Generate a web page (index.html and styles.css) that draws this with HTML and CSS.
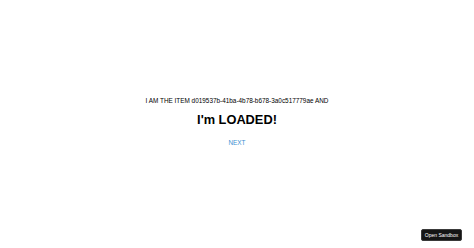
FILE: index.html
```html
<!DOCTYPE html>
<html>
<head>
<meta charset="utf-8">
<link rel="stylesheet" href="styles.css">
</head>
<body>
<main class="page">
  <div class="content">
    <p class="item">I AM THE ITEM d019537b-41ba-4b78-b678-3a0c517779ae AND</p>
    <h1 class="title">I'm LOADED!</h1>
    <a class="next" href="#">NEXT</a>
  </div>
</main>
<button class="sandbox">Open Sandbox</button>
</body>
</html>
```
FILE: styles.css
```css
html, body {
  margin: 0;
  padding: 0;
  background: #ffffff;
  font-family: "Liberation Sans", Arial, sans-serif;
  color: #000;
}
.page {
  width: 474px;
  height: 248px;
  display: flex;
  justify-content: center;
}
.content {
  padding-top: 97px;
  display: flex;
  flex-direction: column;
  align-items: center;
}
.item {
  margin: 0;
  font-size: 6.4px;
  line-height: 8px;
}
.title {
  margin: 7px 0 0;
  font-size: 12.8px;
  line-height: 15px;
  font-weight: bold;
}
.next {
  margin-top: 12px;
  font-size: 6.4px;
  line-height: 8px;
  color: #3d8fd1;
  text-decoration: none;
}
.sandbox {
  position: fixed;
  right: 12px;
  bottom: 7px;
  width: 41px;
  height: 12px;
  padding: 0;
  background: #151515;
  color: #fff;
  border: 1px solid #3a3a3a;
  border-radius: 2px;
  font-family: "Liberation Sans", Arial, sans-serif;
  font-size: 5px;
  line-height: 10px;
  white-space: nowrap;
}
```
